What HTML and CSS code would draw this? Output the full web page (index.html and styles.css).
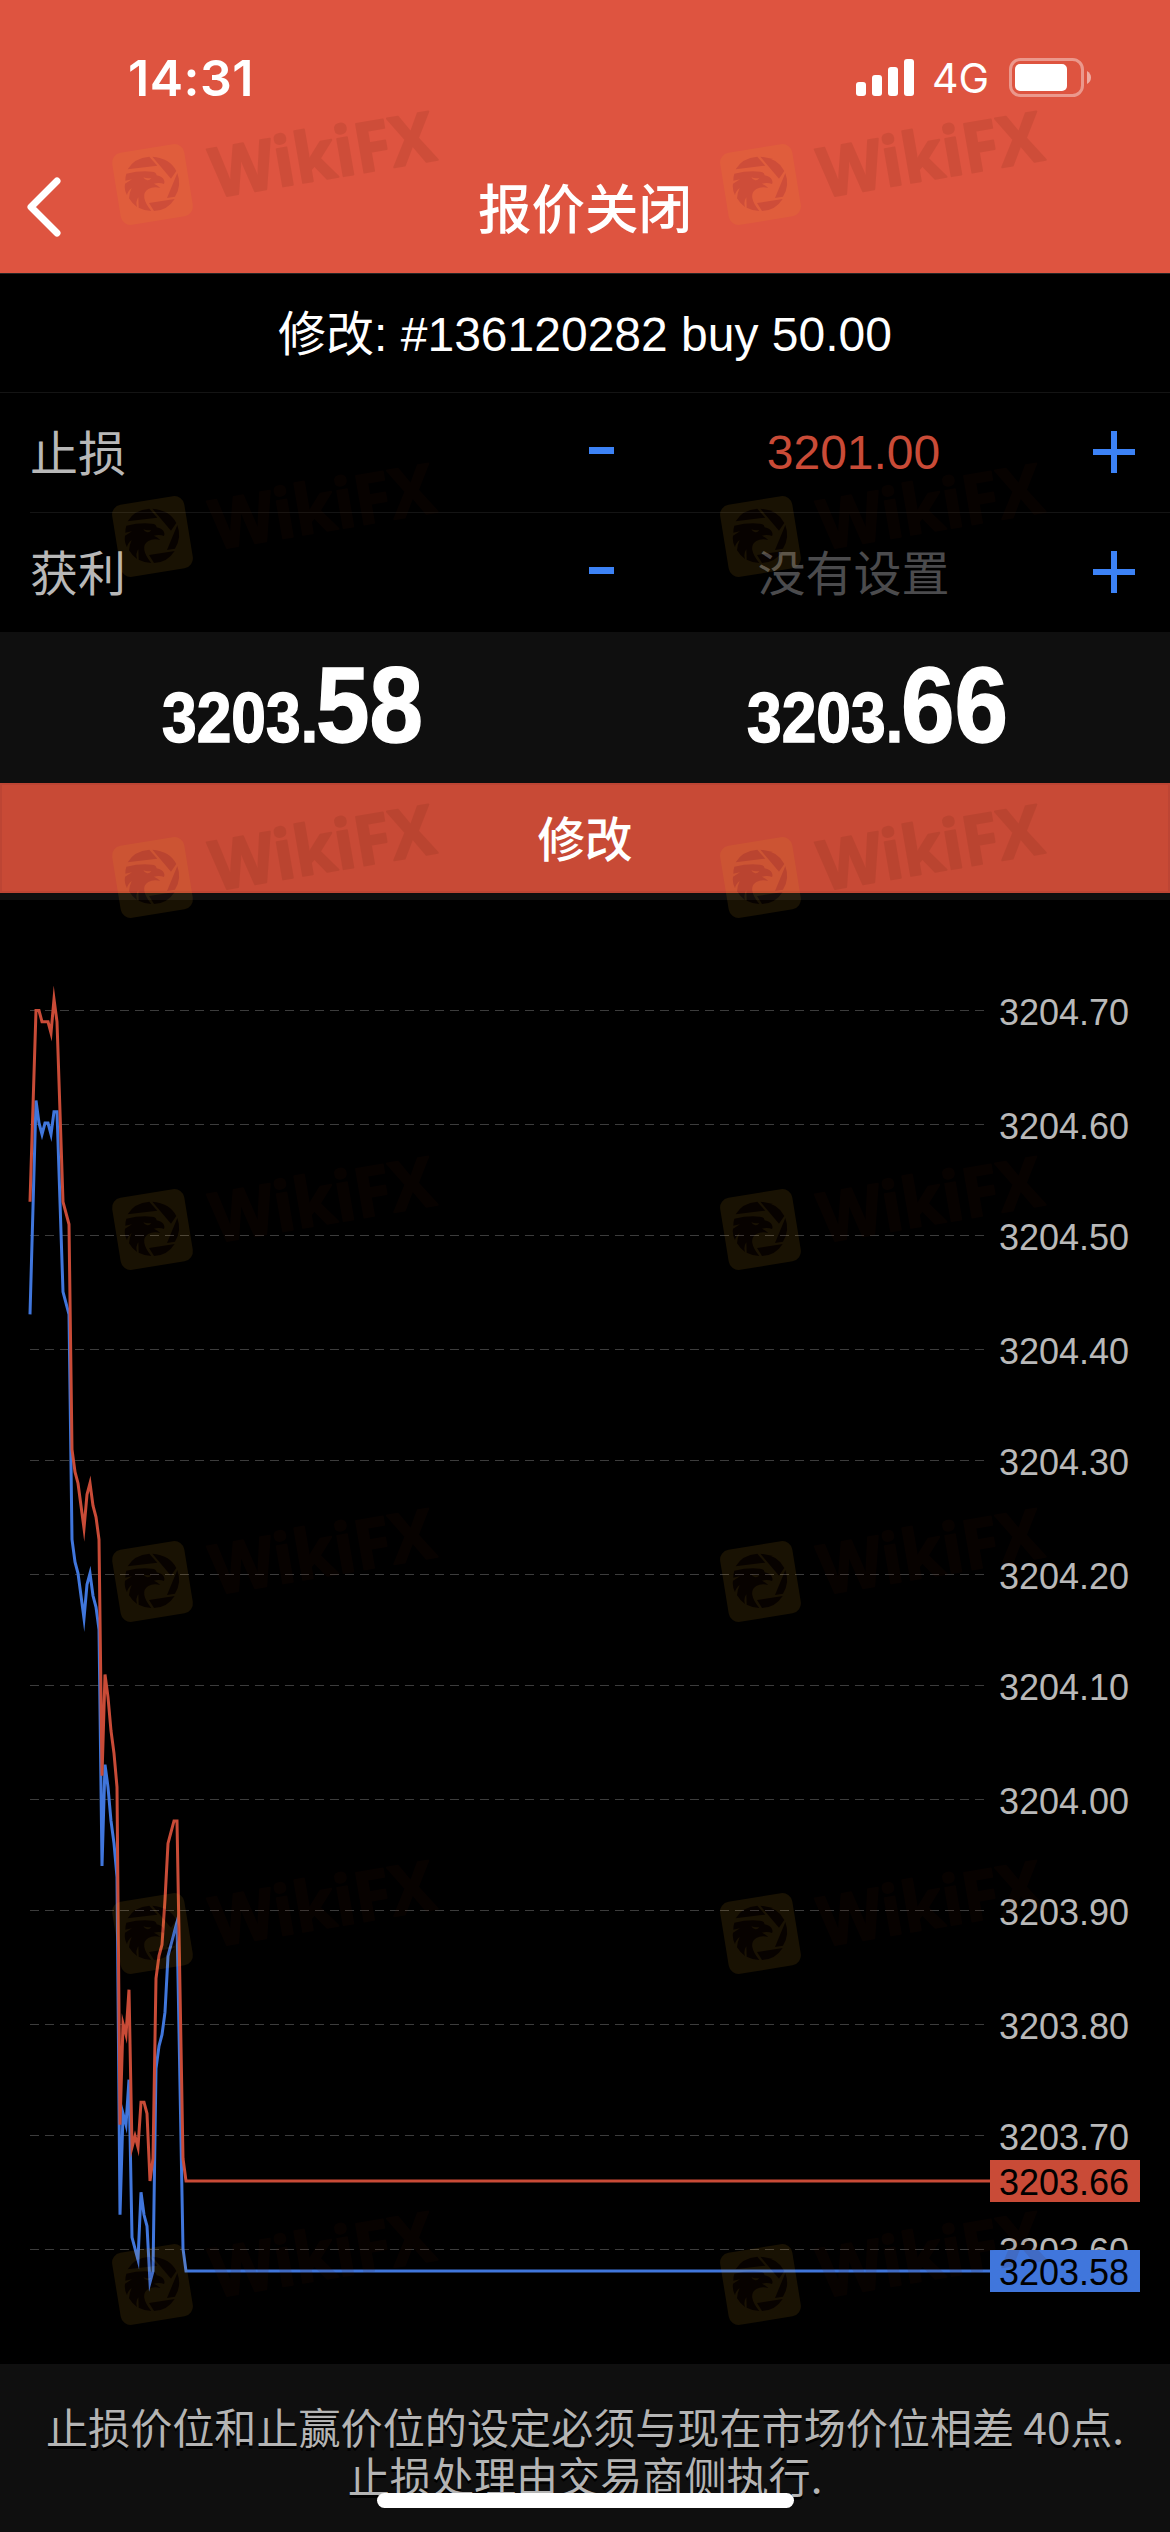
FILE: index.html
```
<!DOCTYPE html>
<html lang="zh-CN">
<head>
  <meta charset="UTF-8">
  <title>报价关闭</title>
  <link rel="stylesheet" href="styles.css">
</head>
<body>
  <header class="header">
    <div class="status-bar">
      <span class="time">14:31</span>
      <div class="status-icons">
        <svg class="signal" width="58" height="38" viewBox="0 0 58 38">
          <rect x="0" y="23" width="10" height="14" rx="3"/>
          <rect x="16" y="16" width="10" height="21" rx="3"/>
          <rect x="32" y="8" width="10" height="29" rx="3"/>
          <rect x="48" y="0" width="10" height="37" rx="3"/>
        </svg>
        <span class="network">4G</span>
        <svg class="battery" width="83" height="40" viewBox="0 0 83 40">
          <rect class="battery-shell" x="1.5" y="1.5" width="72" height="36" rx="10"/>
          <rect x="6" y="6" width="52" height="27" rx="5"/>
          <path class="battery-tip" d="M78 13 Q82 15.500 82 19.500 Q82 23.500 78 26 Z"/>
        </svg>
      </div>
    </div>
    <div class="nav-bar">
      <svg class="back" width="40" height="64" viewBox="0 0 40 64">
        <path d="M33 6 L7 32 L33 58"/>
      </svg>
      <h1 class="title">报价关闭</h1>
    </div>
  </header>

  <main class="order">
    <div class="order-name">修改: #136120282 buy 50.00</div>
    <div class="field">
      <span class="field-label">止损</span>
      <span class="minus"></span>
      <span class="field-value">3201.00</span>
      <svg class="plus" width="42" height="42" viewBox="0 0 42 42"><path d="M0 21 H42 M21 0 V42"/></svg>
    </div>
    <div class="field">
      <span class="field-label">获利</span>
      <span class="minus"></span>
      <span class="field-value empty">没有设置</span>
      <svg class="plus" width="42" height="42" viewBox="0 0 42 42"><path d="M0 21 H42 M21 0 V42"/></svg>
    </div>

    <div class="quotes">
      <svg class="quote" viewBox="0 0 585 151">
        <text class="pips-small" x="162" y="110" textLength="156" lengthAdjust="spacingAndGlyphs">3203.</text>
        <text class="pips-big" x="316" y="110" textLength="107" lengthAdjust="spacingAndGlyphs">58</text>
      </svg>
      <svg class="quote" viewBox="0 0 585 151">
        <text class="pips-small" x="162" y="110" textLength="156" lengthAdjust="spacingAndGlyphs">3203.</text>
        <text class="pips-big" x="316" y="110" textLength="107" lengthAdjust="spacingAndGlyphs">66</text>
      </svg>
    </div>
    <button class="modify">修改</button>
  </main>

  <svg class="chart" id="chart" viewBox="0 900 1170 1464"></svg>

  <footer class="footer">
    <p>止损价位和止赢价位的设定必须与现在市场价位相差 40点.<br>止损处理由交易商侧执行.</p>
    <div class="home-indicator"></div>
  </footer>

  <svg class="watermarks" id="watermarks" viewBox="0 0 1170 2532">
    <defs>
      <g id="mark">
        <rect class="mark-gold" x="26" y="48" width="73" height="73" rx="10" transform="rotate(-9.2 62.5 84.500)"/>
        <g transform="scale(.3333)">
          <path class="mark-dark" d="M113 208 Q132 174 178 170 L202 197 Z"/>
          <path class="mark-dark" d="M187 170 Q240 174 259 213 L243 236 Z"/>
          <path class="mark-dark" d="M262 219 Q276 257 255 290 L231 294 Z"/>
          <path class="mark-dark" d="M254 297 Q232 332 192 333 L177 309 Z"/>
          <path class="mark-dark" d="M109 221 Q150 211 186 215 Q199 216 200 226 Q217 229 222 240 Q225 247 222 252 Q208 246 192 251 Q204 256 211 264 Q190 259 175 267 Q160 276 163 294 Q166 311 184 333 Q163 332 146 323 L145 292 Q136 305 141 321 Q125 309 117 295 Q117 281 125 264 Q112 275 111 286 Q102 268 105 251 L126 238 L106 242 Q106 229 109 221 Z"/>
          <path class="mark-gold" d="M160 232 Q172 237 184 234 Q179 242 172 241 Q164 240 160 232 Z"/>
        </g>
        <text class="mark-dark mark-text" transform="translate(125 98) rotate(-9.700)" textLength="226" lengthAdjust="spacingAndGlyphs">WikiFX</text>
      </g>
    </defs>
  </svg>

  <script src="script.js"></script>
</body>
</html>
```

FILE: styles.css
```
* {
  box-sizing: border-box;
}
body {
  margin: 0;
  width: 1170px;
  height: 2532px;
  position: relative;
  display: flex;
  flex-direction: column;
  overflow: hidden;
  background: #000;
  color: #fff;
  font-family: "Liberation Sans", "Noto Sans CJK SC", sans-serif;
}
svg {
  display: block;
}

/* header */
.header {
  height: 273px;
  background: #de5440;
}
.status-bar {
  height: 147px;
  padding: 8px 78px 0 128px;
  display: flex;
  align-items: center;
  justify-content: space-between;
}
.time {
  font-family: Inter, sans-serif;
  font-size: 50px;
  font-weight: 600;
  letter-spacing: 0.5px;
}
.status-icons {
  display: flex;
  align-items: center;
  fill: #fff;
}
.network {
  margin: 0 20px 0 18px;
  font-family: Inter, sans-serif;
  font-size: 41px;
  line-height: 40px;
  font-weight: 400;
}
.battery-shell {
  fill: none;
  stroke: #fff;
  stroke-width: 3;
  opacity: .4;
}
.battery-tip {
  opacity: .5;
}
.nav-bar {
  height: 118px;
  padding: 0 24px;
  display: grid;
  grid-template-columns: 40px 1fr 40px;
  align-items: center;
}
.back {
  margin-top: 2px;
  fill: none;
  stroke: #fff;
  stroke-width: 7;
  stroke-linecap: round;
  stroke-linejoin: round;
}
.title {
  margin: 0;
  font-size: 53.5px;
  line-height: 80px;
  font-weight: 500;
  font-family: "Noto Sans CJK SC", sans-serif;
  text-align: center;
}

/* order form */
.order-name {
  height: 120px;
  line-height: 122px;
  border-top: 1px solid #252525;
  border-bottom: 1px solid #141414;
  font-size: 48px;
  text-align: center;
}
.field {
  height: 119.5px;
  margin-left: 30px;
  padding-right: 35px;
  display: grid;
  grid-template-columns: 559px 25px 1fr 42px;
  align-items: center;
  border-bottom: 1px solid #141414;
  font-size: 48px;
  color: #b8b8b8;
}
.field + .field {
  border-bottom: 0;
}
.field-label {
  padding-bottom: 4px;
}
.minus {
  height: 7px;
  margin-bottom: 4px;
  background: #3c82f6;
}
.field-value {
  color: #c94b37;
  font-size: 48px;
  text-align: center;
}
.field-value.empty {
  padding-bottom: 4px;
  color: #4b4b4d;
}
.plus {
  fill: none;
  stroke: #3c82f6;
  stroke-width: 6;
}
.quotes {
  height: 151px;
  display: flex;
  background: #0f0f0f;
}
.quote {
  width: 585px;
  height: 151px;
  fill: #fff;
  stroke: #fff;
  stroke-width: 1.5;
  font-weight: 700;
}
.pips-small {
  font-size: 71px;
}
.pips-big {
  font-size: 107px;
}
.modify {
  display: block;
  width: 100%;
  height: 110px;
  padding: 0 0 4px;
  border: 2px solid #bd4534;
  background: #c84a36;
  color: #fff;
  font: 500 47.5px "Noto Sans CJK SC", sans-serif;
}
.order {
  height: 627px;
  border-bottom: 7px solid #0f0f0f;
}

/* tick chart */
.chart {
  width: 1170px;
  height: 1464px;
  font-size: 36px;
}
.grid-line {
  stroke: #3c3c3c;
  stroke-width: 1;
  stroke-dasharray: 9 6;
}
.grid-label {
  fill: #b9b9b9;
}
.series {
  fill: none;
  stroke-width: 3;
  stroke-miterlimit: 10;
}
.bid {
  stroke: #4076dc;
}
.ask {
  stroke: #c94b37;
}
.bid-tag {
  fill: #4076dc;
}
.ask-tag {
  fill: #c94b37;
}
.tag-label {
  fill: #000;
}

/* footer */
.footer {
  height: 168px;
  padding-top: 38px;
  position: relative;
  background: #0f0f0f;
}
.footer p {
  margin: 0;
  font-family: "Noto Sans CJK SC", sans-serif;
  font-size: 42.1px;
  line-height: 48.5px;
  color: #b4b4b4;
  text-align: center;
  text-shadow: 0 3px 0 #000;
  white-space: nowrap;
}
.home-indicator {
  position: absolute;
  left: 377px;
  bottom: 24px;
  width: 417px;
  height: 15px;
  border-radius: 8px;
  background: #fff;
}

/* watermark overlay */
.watermarks {
  position: absolute;
  top: 0;
  left: 0;
  width: 1170px;
  height: 2532px;
  pointer-events: none;
}
.mark {
  opacity: .1;
}
.mark-gold {
  fill: #f5ac1e;
}
.mark-dark {
  fill: #4a1600;
}
.mark-text {
  font-family: "Open Sans", sans-serif;
  font-size: 69px;
  font-weight: 700;
  stroke: #4a1600;
  stroke-width: 2;
  stroke-linejoin: round;
}
```

FILE: script.js
```
const SVG = "http://www.w3.org/2000/svg";
const chart = document.getElementById("chart");

function add(parent, name, attrs, text) {
  const el = document.createElementNS(SVG, name);
  for (const key in attrs) el.setAttribute(key, attrs[key]);
  if (text) el.textContent = text;
  parent.appendChild(el);
}

// Prices are stored as hundredths above 3203.00
function priceY(p) {
  return 1010.5 + (170 - p) * 11.255;
}

const gridY = [1010, 1124, 1235, 1349, 1460, 1574, 1685, 1799, 1910, 2024, 2135, 2249];
gridY.forEach((y, i) => {
  add(chart, "line", { class: "grid-line", x1: 30, x2: 985, y1: y + 0.5, y2: y + 0.5 });
  add(chart, "text", { class: "grid-label", x: 999, y: y + 14.5 }, ((32047 - i) / 10).toFixed(1) + "0");
});

const bid = [
  [30, 143], [36, 162], [39, 160], [42, 159], [45, 160], [48, 160], [51, 159], [54, 161], [57, 161],
  [63, 145], [69, 143], [72, 123], [75, 121], [78, 120], [81, 118], [84, 116], [87, 119], [90, 120],
  [93, 118], [96, 117], [99, 115], [102, 94], [105, 103], [108, 101], [111, 98], [114, 96], [117, 93],
  [120, 63], [123, 72], [126, 71], [129, 75], [132, 61], [135, 60], [138, 59], [141, 65], [144, 63],
  [147, 62], [150, 57], [153, 58], [156, 76], [159, 78], [162, 79], [165, 81], [168, 86], [171, 87],
  [174, 88], [177, 89], [183, 60], [186, 58], [990, 58]
];
const ask = [
  [30, 153], [36, 170], [39, 170], [42, 169], [48, 169], [51, 168], [54, 171], [57, 169], [63, 153],
  [69, 151], [72, 131], [75, 129], [78, 128], [81, 126], [84, 124], [87, 127], [90, 128], [93, 126],
  [96, 125], [99, 123], [102, 102], [105, 111], [108, 109], [111, 106], [114, 104], [117, 101],
  [120, 71], [123, 80], [126, 79], [129, 83], [132, 69], [135, 70], [138, 69], [141, 73], [144, 73],
  [147, 72], [150, 66], [153, 68], [156, 84], [159, 86], [162, 87], [165, 91], [168, 96], [171, 97],
  [174, 98], [177, 98], [183, 68], [186, 66], [990, 66]
];

function drawSeries(data, name) {
  const points = data.map(([x, p]) => x + "," + priceY(p).toFixed(1)).join(" ");
  add(chart, "polyline", { class: "series " + name, points: points });
}
drawSeries(bid, "bid");
drawSeries(ask, "ask");

// Current price tags
function drawTag(p, name) {
  const y = Math.round(priceY(p));
  add(chart, "rect", { class: name + "-tag", x: 990, y: y - 21, width: 150, height: 42 });
  add(chart, "text", { class: "tag-label", x: 999, y: y + 14 }, "3203." + p);
}
drawTag(66, "ask");
drawTag(58, "bid");

// Watermark tiles
[0, 352, 693, 1045, 1397, 1749, 2100].forEach(y => {
  [90, 698].forEach(x => {
    add(document.getElementById("watermarks"), "use", { href: "#mark", class: "mark", x: x, y: y + 100 });
  });
});
```
